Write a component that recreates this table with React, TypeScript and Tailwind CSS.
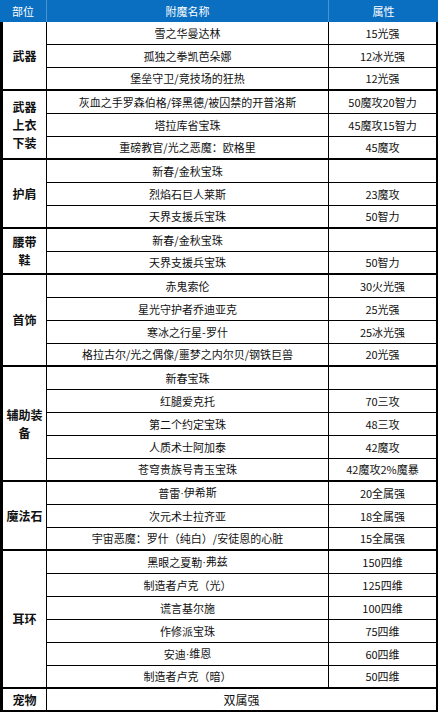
type Row = { name: string; attr: string };
type Group = { label: string[]; rows: Row[]; merged?: boolean };

const groups: Group[] = [
  {
    label: ["武器"],
    rows: [
      { name: "雪之华曼达林", attr: "15光强" },
      { name: "孤独之拳凯芭朵娜", attr: "12冰光强" },
      { name: "堡垒守卫/竞技场的狂热", attr: "12光强" },
    ],
  },
  {
    label: ["武器", "上衣", "下装"],
    rows: [
      { name: "灰血之手罗森伯格/铎黑德/被囚禁的开普洛斯", attr: "50魔攻20智力" },
      { name: "塔拉库省宝珠", attr: "45魔攻15智力" },
      { name: "重磅教官/光之恶魔：欧格里", attr: "45魔攻" },
    ],
  },
  {
    label: ["护肩"],
    rows: [
      { name: "新春/金秋宝珠", attr: "" },
      { name: "烈焰石巨人莱斯", attr: "23魔攻" },
      { name: "天界支援兵宝珠", attr: "50智力" },
    ],
  },
  {
    label: ["腰带", "鞋"],
    rows: [
      { name: "新春/金秋宝珠", attr: "" },
      { name: "天界支援兵宝珠", attr: "50智力" },
    ],
  },
  {
    label: ["首饰"],
    rows: [
      { name: "赤鬼索伦", attr: "30火光强" },
      { name: "星光守护者乔迪亚克", attr: "25光强" },
      { name: "寒冰之行星-罗什", attr: "25冰光强" },
      { name: "格拉古尔/光之偶像/噩梦之内尔贝/钢铁巨兽", attr: "20光强" },
    ],
  },
  {
    label: ["辅助装", "备"],
    rows: [
      { name: "新春宝珠", attr: "" },
      { name: "红腿爱克托", attr: "70三攻" },
      { name: "第二个约定宝珠", attr: "48三攻" },
      { name: "人质术士阿加泰", attr: "42魔攻" },
      { name: "苍穹贵族号青玉宝珠", attr: "42魔攻2%魔暴" },
    ],
  },
  {
    label: ["魔法石"],
    rows: [
      { name: "普雷·伊希斯", attr: "20全属强" },
      { name: "次元术士拉齐亚", attr: "18全属强" },
      { name: "宇宙恶魔：罗什（纯白）/安徒恩的心脏", attr: "15全属强" },
    ],
  },
  {
    label: ["耳环"],
    rows: [
      { name: "黑眼之夏勒·弗兹", attr: "150四维" },
      { name: "制造者卢克（光）", attr: "125四维" },
      { name: "谎言基尔施", attr: "100四维" },
      { name: "作修派宝珠", attr: "75四维" },
      { name: "安迪·维恩", attr: "60四维" },
      { name: "制造者卢克（暗）", attr: "50四维" },
    ],
  },
  {
    label: ["宠物"],
    rows: [{ name: "双属强", attr: "" }],
    merged: true,
  },
];

// the middle dot is half-width in the source, so render it in a latin font
function Name({ text }: { text: string }) {
  const parts = text.split("·");
  return (
    <>
      {parts.map((p, i) => (
        <span key={i}>
          {i > 0 && <span style={{ fontFamily: '"Liberation Sans", sans-serif' }}>·</span>}
          {p}
        </span>
      ))}
    </>
  );
}

function GroupBlock({ group }: { group: Group }) {
  return (
    <div className="flex border-b-2 border-black">
      <div className="w-[44px] shrink-0 border-r border-black flex flex-col items-center justify-center text-[12px] font-bold leading-[18px]">
        {group.label.map((l, i) => (
          <span key={i}>{l}</span>
        ))}
      </div>
      <div className="flex-1 flex flex-col">
        {group.rows.map((r, i) => {
          const last = i === group.rows.length - 1;
          return (
            <div
              key={i}
              className={
                last
                  ? "h-[21px] flex items-center"
                  : "h-[23px] flex items-center border-b border-black"
              }
            >
              {group.merged ? (
                <div className="flex-1 text-center text-[12px]">{r.name}</div>
              ) : (
                <>
                  <div className="w-[282px] h-full flex items-center justify-center border-r border-black text-[11px] whitespace-nowrap">
                    <Name text={r.name} />
                  </div>
                  <div className="flex-1 h-full flex items-center justify-center text-[11px] whitespace-nowrap">
                    {r.attr}
                  </div>
                </>
              )}
            </div>
          );
        })}
      </div>
    </div>
  );
}

export default function App() {
  return (
    <div
      className="w-[440px] h-[714px] bg-white text-[#111] overflow-hidden"
      style={{ fontFamily: '"Noto Sans CJK SC", "Microsoft YaHei", sans-serif' }}
    >
      <div className="w-[438px]">
        <div className="h-[22px] bg-[#0b6fc1] text-white text-[11px] flex">
          <div className="w-[47px] flex items-center justify-center border-r border-[#4a92d2]">部位</div>
          <div className="w-[282px] flex items-center justify-center border-r border-[#4a92d2]">附魔名称</div>
          <div className="flex-1 flex items-center justify-center">属性</div>
        </div>
        <div className="border-l-[3px] border-r-2 border-black">
          {groups.map((g, i) => (
            <GroupBlock key={i} group={g} />
          ))}
        </div>
      </div>
    </div>
  );
}
